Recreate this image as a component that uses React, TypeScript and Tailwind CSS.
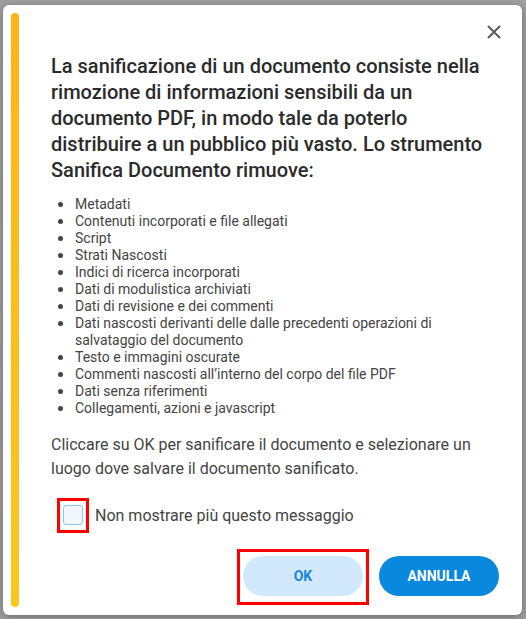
import React from 'react'

const ITEMS = [
  'Metadati',
  'Contenuti incorporati e file allegati',
  'Script',
  'Strati Nascosti',
  'Indici di ricerca incorporati',
  'Dati di modulistica archiviati',
  'Dati di revisione e dei commenti',
  'Dati nascosti derivanti delle dalle precedenti operazioni di salvataggio del documento',
  'Testo e immagini oscurate',
  'Commenti nascosti all’interno del corpo del file PDF',
  'Dati senza riferimenti',
  'Collegamenti, azioni e javascript',
]

export default function App() {
  return (
    <div
      className="min-h-screen w-[526px] h-[619px] overflow-hidden bg-[#a1a1a1] pl-[3px] pt-[5px]"
      style={{ fontFamily: 'Roboto, "Liberation Sans", sans-serif' }}
    >
      {/* Dialog */}
      <div className="flex w-[519px] rounded-md bg-white shadow-[0_2px_10px_rgba(0,0,0,0.35)]">
        {/* Accent bar */}
        <div className="my-2 ml-2 w-2 shrink-0 self-stretch rounded-full bg-linear-to-b from-[#fdb515] to-[#fac81a]" />

        <div className="flex flex-1 flex-col pl-[32px] pr-[23px] pt-[20px] pb-[10px]">
          <div className="flex justify-end">
            <button className="-mr-[2px] text-[#5a5a5a]" aria-label="Chiudi">
              <svg width="14" height="14" viewBox="0 0 14 14" fill="none" stroke="currentColor" strokeWidth="2">
                <path d="M1 1 13 13M13 1 1 13" />
              </svg>
            </button>
          </div>

          <div className="pr-[14px]">
            <h2 className="mt-[14px] text-[20px] leading-[26px] font-medium text-[#2b2b2b]">
              La sanificazione di un documento consiste nella rimozione di informazioni sensibili da un
              documento PDF, in modo tale da poterlo distribuire a un pubblico più vasto. Lo strumento
              Sanifica Documento rimuove:
            </h2>

            <ul className="mt-[13px] text-[14px] leading-[17px] text-[#444]">
              {ITEMS.map((item) => (
                <li key={item} className="flex">
                  <span className="w-[24px] shrink-0">
                    <span className="ml-[7px] mt-[6px] block h-[5px] w-[5px] rounded-full bg-[#444]" />
                  </span>
                  <span>{item}</span>
                </li>
              ))}
            </ul>

            <p className="mt-[16px] text-[16px] leading-[24px] text-[#444]">
              Cliccare su OK per sanificare il documento e selezionare un luogo dove salvare il documento
              sanificato.
            </p>
          </div>

          <label className="mt-[17px] flex items-center">
            <span className="ml-[6px] border-[3px] border-[#ff0000] px-[3px] pt-[4px] pb-[5px]">
              <span className="block h-[20px] w-[20px] rounded-[3px] border border-[#90c6f4] bg-[#f1f7fd]" />
            </span>
            <span className="ml-[6px] text-[16px] text-[#444]">Non mostrare più questo messaggio</span>
          </label>

          <div className="mt-[16px] flex items-start justify-end gap-[10px]">
            <div className="border-[3px] border-[#ff0000] px-[3px] pt-[4px] pb-[6px]">
              <button className="h-[40px] w-[120px] rounded-full bg-[#d2e8fc] text-[14px] font-bold text-[#1a84d8]">
                OK
              </button>
            </div>
            <button className="mt-[7px] h-[40px] w-[120px] rounded-full bg-[#0a88de] text-[14px] font-bold text-white">
              ANNULLA
            </button>
          </div>
        </div>
      </div>
    </div>
  )
}
